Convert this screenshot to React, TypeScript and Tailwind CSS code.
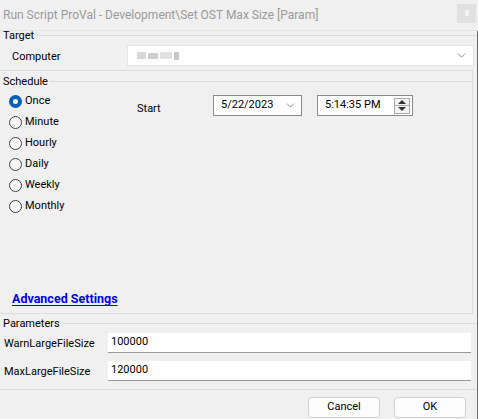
import { ChevronDown } from 'lucide-react';

const schedules = ['Once', 'Minute', 'Hourly', 'Daily', 'Weekly', 'Monthly'];

function GroupHeader({ label }: { label: string }) {
  return (
    <div className="flex items-center h-[8px] pl-[3px]">
      <span className="leading-none pr-[2px]">{label}</span>
      <div className="flex-1 border-t border-[#dcdcdc]" />
    </div>
  );
}

function Radio({ label, checked }: { label: string; checked?: boolean }) {
  return (
    <div className="flex items-center h-[21px] pl-[9px] gap-[3px]">
      {checked ? (
        <div className="w-[13px] h-[13px] rounded-full bg-[#005fb8] flex items-center justify-center">
          <div className="w-[5px] h-[5px] rounded-full bg-white" />
        </div>
      ) : (
        <div className="w-[13px] h-[13px] rounded-full border border-[#444] bg-[#f7f7f7]" />
      )}
      <span>{label}</span>
    </div>
  );
}

export default function App() {
  return (
    <div className="w-[478px] h-[419px] bg-[#f0f0f0] overflow-hidden text-[11px] text-black font-['Roboto',sans-serif]">
      {/* Title bar */}
      <div className="h-[31px] flex items-center justify-between pl-[3px] pr-[2px] border-b border-[#e4e4e4]">
        <span className="text-[12px] text-[#9a9a9a] mb-[1px]">Run Script ProVal - Development\Set OST Max Size [Param]</span>
        <div className="w-[19px] h-[19px] bg-[#e1e1e1] flex items-center justify-center mb-[4px]">
          <div className="w-[4px] h-[6px] bg-[#f2f2f2]" />
        </div>
      </div>

      <div className="border-r border-[#6a6a6a] h-[388px] flex flex-col">
        {/* Target */}
        <GroupHeader label="Target" />
        <div className="flex items-center h-[21px] mt-[6px]">
          <span className="w-[127px] pl-[12px] pt-[3px]">Computer</span>
          <div className="flex-1 mr-[3px] h-[21px] bg-white border border-[#e3e3e3] flex items-center justify-between pl-[9px] pr-[5px]">
            <div className="flex items-center gap-[2px] opacity-70">
              <div className="w-[9px] h-[7px] bg-[#c8c8c8]" />
              <div className="w-[10px] h-[6px] bg-[#b8b8b8]" />
              <div className="w-[12px] h-[7px] bg-[#d6d6d6]" />
              <div className="w-[5px] h-[8px] bg-[#b0b0b0]" />
            </div>
            <ChevronDown className="w-[13px] h-[13px] text-[#555]" strokeWidth={1.3} />
          </div>
        </div>

        {/* Schedule */}
        <div className="mt-[4px] h-[244px] mr-[4px] border-t border-b border-r border-[#dcdcdc] flex flex-col">
          <div className="mt-[6px]">
            <GroupHeader label="Schedule" />
          </div>
          <div className="flex mt-[6px]">
            <div className="w-[124px]">
              {schedules.map((s, i) => (
                <Radio key={s} label={s} checked={i === 0} />
              ))}
            </div>
            <div className="flex items-start mt-[4px]">
              <span className="w-[89px] pl-[13px] pt-[6px]">Start</span>
              <div className="w-[89px] h-[21px] bg-white border border-[#8a8a8a] flex items-center justify-between pl-[7px] pr-[4px]">
                <span>5/22/2023</span>
                <ChevronDown className="w-[13px] h-[13px] text-[#555]" strokeWidth={1.3} />
              </div>
              <div className="ml-[15px] w-[96px] h-[21px] bg-white border border-[#8a8a8a] flex items-center justify-between pl-[7px] pr-[2px]">
                <span>5:14:35 PM</span>
                <div className="flex flex-col w-[16px] h-[16px] border border-[#aaa]">
                  <div className="flex-1 flex items-center justify-center border-b border-[#aaa] bg-[#f3f3f3]">
                    <div className="w-0 h-0 border-l-[4px] border-r-[4px] border-b-[4px] border-l-transparent border-r-transparent border-b-[#333]" />
                  </div>
                  <div className="flex-1 flex items-center justify-center bg-[#f3f3f3]">
                    <div className="w-0 h-0 border-l-[4px] border-r-[4px] border-t-[4px] border-l-transparent border-r-transparent border-t-[#333]" />
                  </div>
                </div>
              </div>
            </div>
          </div>
          <div className="flex-1" />
          <div className="pl-[12px] pb-[4px]">
            <a className="text-[12.5px] font-bold text-[#0000ee] underline underline-offset-2">Advanced Settings</a>
          </div>
        </div>

        {/* Parameters */}
        <div className="mt-[5px]">
          <GroupHeader label="Parameters" />
        </div>
        <div className="flex items-center h-[20px] mt-[6px]">
          <span className="w-[108px] pl-[4px] pt-[3px]">WarnLargeFileSize</span>
          <div className="flex-1 mr-[6px] h-[20px] bg-white border-b border-[#9a9a9a] flex items-center pl-[3px]">100000</div>
        </div>
        <div className="flex items-center h-[20px] mt-[8px]">
          <span className="w-[108px] pl-[4px] pt-[3px]">MaxLargeFileSize</span>
          <div className="flex-1 mr-[6px] h-[20px] bg-white border-b border-[#9a9a9a] flex items-center pl-[3px]">120000</div>
        </div>

        {/* Buttons */}
        <div className="mt-[8px] border-t border-[#dcdcdc] flex justify-end gap-[14px] pr-[11px] pt-[7px]">
          <button className="w-[72px] h-[21px] bg-[#fdfdfd] border border-[#d0d0d0] rounded-[4px]">Cancel</button>
          <button className="w-[72px] h-[21px] bg-[#fdfdfd] border border-[#d0d0d0] rounded-[4px]">OK</button>
        </div>
      </div>
    </div>
  );
}
